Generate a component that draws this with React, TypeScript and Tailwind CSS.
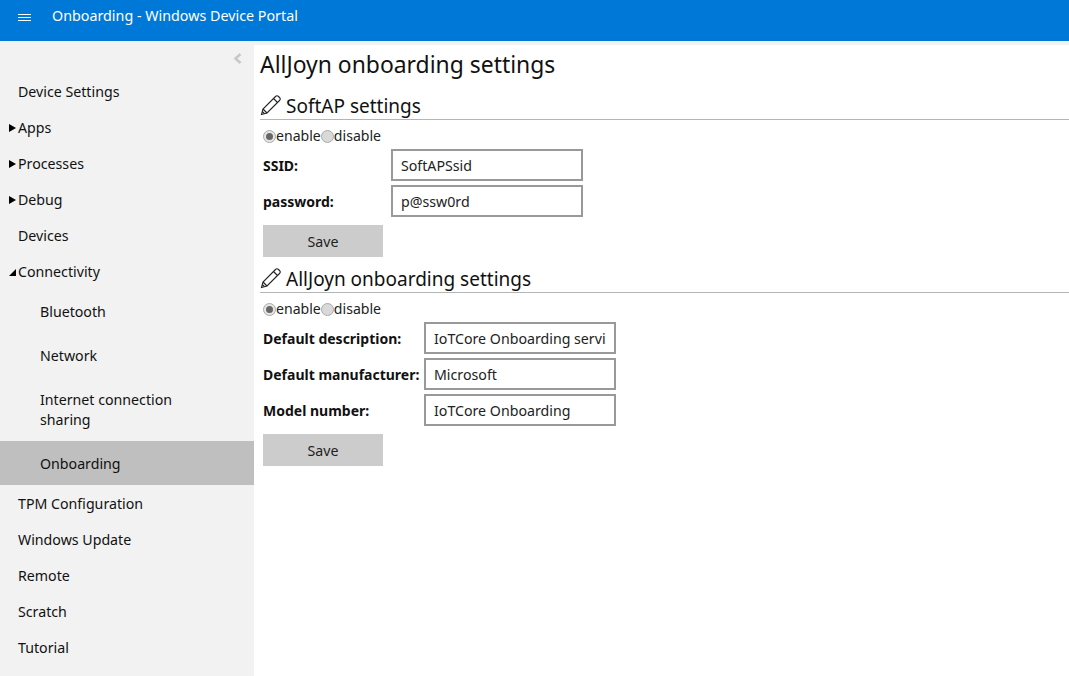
const topItems = [
  { label: 'Device Settings' },
  { label: 'Apps', arrow: 'right' },
  { label: 'Processes', arrow: 'right' },
  { label: 'Debug', arrow: 'right' },
  { label: 'Devices' },
  { label: 'Connectivity', arrow: 'down' },
]

const bottomItems = ['TPM Configuration', 'Windows Update', 'Remote', 'Scratch', 'Tutorial']

function NavRow({ label, arrow }: { label: string; arrow?: string }) {
  return (
    <div className="relative flex h-[36px] items-center pl-[18px] text-[14.2px] text-[#111]">
      {arrow === 'right' && (
        <span className="absolute left-[9px] top-[14px] h-0 w-0 border-y-[4px] border-l-[7px] border-y-transparent border-l-black" />
      )}
      {arrow === 'down' && (
        <span className="absolute left-[9px] top-[15px] h-0 w-0 border-b-[7px] border-l-[7px] border-b-black border-l-transparent" />
      )}
      {label}
    </div>
  )
}

function SubRow({ label, active }: { label: string; active?: boolean }) {
  return (
    <div className={`flex items-center pb-[11px] pl-[40px] pr-[60px] pt-[13px] text-[14.2px] leading-[20px] text-[#111] ${active ? 'bg-[#bfbfbf]' : ''}`}>
      {label}
    </div>
  )
}

function Pencil() {
  return (
    <svg width="21" height="22" viewBox="0 0 21 22" fill="none" stroke="#222" strokeWidth="1.1" className="shrink-0">
      <path d="M1.5 20.5 L3 15 L15.5 2.5 Q17 1 18.5 2.5 L19.5 3.5 Q21 5 19.5 6.5 L7 19 Z" />
      <path d="M3 15 L7 19 M13.5 4.5 L17.5 8.5 M2.3 17.5 L4.5 19.7" />
    </svg>
  )
}

function SectionHeading({ children }: { children: string }) {
  return (
    <div className="flex h-[26px] items-end gap-[5px] border-b border-[#b5b5b5] pb-[1px] text-[19px] leading-[24px] text-[#111]">
      <span className="mb-[2px]"><Pencil /></span>
      <span>{children}</span>
    </div>
  )
}

function RadioPair() {
  return (
    <div className="flex h-[27px] items-center pl-[3px] pt-[5px] text-[14.1px] text-[#222]">
      <span className="flex h-[13px] w-[13px] items-center justify-center rounded-full border border-[#aaa] bg-[#e6e6e6]">
        <span className="h-[7px] w-[7px] rounded-full bg-[#666]" />
      </span>
      <span>enable</span>
      <span className="h-[13px] w-[13px] rounded-full border border-[#aaa] bg-[#d9d9d9]" />
      <span>disable</span>
    </div>
  )
}

function Field({ label, value, labelWidth }: { label: string; value: string; labelWidth: string }) {
  return (
    <div className="flex h-[36px] items-center pl-[3px]">
      <span className={`${labelWidth} shrink-0 whitespace-nowrap text-[14px] font-bold text-[#111]`}>{label}</span>
      <div className="flex h-[32px] w-[192px] items-center border-2 border-[#999] bg-white px-[8px] pt-px text-[14.2px] text-[#222]">
        <span className="min-w-0 overflow-hidden whitespace-nowrap">{value}</span>
      </div>
    </div>
  )
}

function SaveButton() {
  return (
    <div className="ml-[3px] mt-[6px] flex h-[32px] w-[120px] items-center justify-center bg-[#cccccc] pt-px text-[14.2px] text-[#222]">
      Save
    </div>
  )
}

export default function App() {
  return (
    <div className="flex h-[676px] w-[1069px] flex-col overflow-hidden bg-[#f2f2f2] font-['Noto_Sans','Open_Sans',sans-serif]">
      {/* header */}
      <div className="flex h-[41px] shrink-0 items-start bg-[#0078d7] text-white">
        <svg width="13" height="8" viewBox="0 0 13 8" stroke="white" strokeWidth="1" className="ml-[18px] mt-[14px] shrink-0">
          <path d="M0 .5H13M0 3.5H13M0 6.5H13" />
        </svg>
        <span className="ml-[21px] mt-[4px] text-[14.3px] leading-[24px]">Onboarding - Windows Device Portal</span>
      </div>

      <div className="flex min-h-0 flex-1">
        {/* sidebar */}
        <aside className="relative w-[254px] shrink-0 pt-[33px]">
          <svg width="10" height="11" viewBox="0 0 10 11" fill="none" stroke="#c8c8c8" strokeWidth="2.6" className="absolute left-[233px] top-[12px]">
            <path d="M7.5 1 L2.5 5.5 L7.5 10" />
          </svg>
          {topItems.map((item) => (
            <NavRow key={item.label} label={item.label} arrow={item.arrow} />
          ))}
          <div className="-mt-px">
            <SubRow label="Bluetooth" />
            <SubRow label="Network" />
            <SubRow label="Internet connection sharing" />
            <SubRow label="Onboarding" active />
          </div>
          <div className="h-px" />
          {bottomItems.map((label) => (
            <NavRow key={label} label={label} />
          ))}
        </aside>

        {/* main */}
        <main className="mt-[4px] flex-1 bg-white pl-[6px]">
          <h1 className="h-[49px] pt-[4px] text-[22.9px] leading-[32px] text-[#111]">AllJoyn onboarding settings</h1>
          <SectionHeading>SoftAP settings</SectionHeading>
          <RadioPair />
          <Field label="SSID:" value="SoftAPSsid" labelWidth="w-[128px]" />
          <Field label="password:" value="p@ssw0rd" labelWidth="w-[128px]" />
          <SaveButton />
          <div className="h-[10px]" />
          <SectionHeading>AllJoyn onboarding settings</SectionHeading>
          <RadioPair />
          <Field label="Default description:" value="IoTCore Onboarding service" labelWidth="w-[161px]" />
          <Field label="Default manufacturer:" value="Microsoft" labelWidth="w-[161px]" />
          <Field label="Model number:" value="IoTCore Onboarding" labelWidth="w-[161px]" />
          <SaveButton />
        </main>
      </div>
    </div>
  )
}
